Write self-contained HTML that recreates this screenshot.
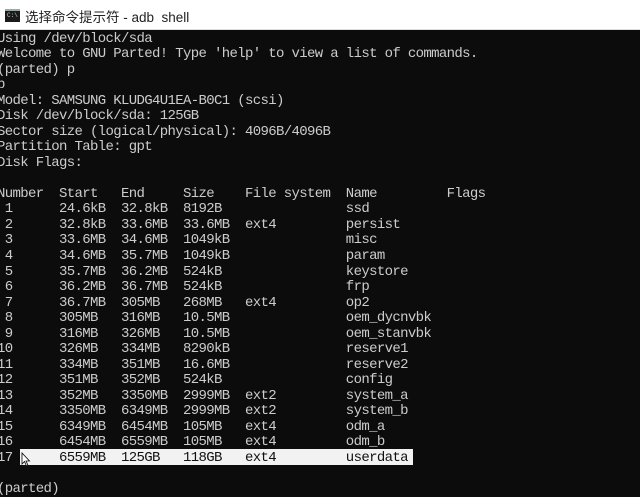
<!DOCTYPE html>
<html><head><meta charset="utf-8"><style>
html,body{margin:0;padding:0;width:640px;height:492px;overflow:hidden;background:#0c0c0c}
#title{position:absolute;left:0;top:0;width:640px;height:29px;background:#fff;border-bottom:1px solid #ddd}
#title .t{position:absolute;left:25px;top:6px;font:13.5px "Liberation Sans","Noto Sans CJK SC",sans-serif;color:#222}
#icon{position:absolute;left:5px;top:9px;width:15px;height:11px;background:#1a1a1a;border-top:2px solid #9aa}
#icon span{position:absolute;left:2px;top:1px;color:#ccc;font:6px "Liberation Mono",monospace}
.l{position:absolute;left:-3px;height:15.53px;line-height:15.53px;font:14px "Liberation Mono",monospace;letter-spacing:-0.65px;color:#cccccc;white-space:pre}
#hl{position:absolute;left:20px;top:449px;width:393px;height:16px;background:#f2f2f2}
</style></head><body>
<div id="title"><div id="icon"><span>C:\</span></div><div class="t">选择命令提示符 - adb&nbsp; shell</div></div>
<div id="hl"></div>
<div class="l" style="top:30.5px">Using /dev/block/sda</div>
<div class="l" style="top:46px">Welcome to GNU Parted! Type 'help' to view a list of commands.</div>
<div class="l" style="top:61.6px">(parted) p</div>
<div class="l" style="top:77.1px">p</div>
<div class="l" style="top:92.6px">Model: SAMSUNG KLUDG4U1EA-B0C1 (scsi)</div>
<div class="l" style="top:108.2px">Disk /dev/block/sda: 125GB</div>
<div class="l" style="top:123.7px">Sector size (logical/physical): 4096B/4096B</div>
<div class="l" style="top:139.2px">Partition Table: gpt</div>
<div class="l" style="top:154.7px">Disk Flags:</div>
<div class="l" style="top:185.8px">Number  Start   End     Size    File system  Name         Flags</div>
<div class="l" style="top:201.3px"> 1      24.6kB  32.8kB  8192B                ssd</div>
<div class="l" style="top:216.9px"> 2      32.8kB  33.6MB  33.6MB  ext4         persist</div>
<div class="l" style="top:232.4px"> 3      33.6MB  34.6MB  1049kB               misc</div>
<div class="l" style="top:247.9px"> 4      34.6MB  35.7MB  1049kB               param</div>
<div class="l" style="top:263.5px"> 5      35.7MB  36.2MB  524kB                keystore</div>
<div class="l" style="top:279px"> 6      36.2MB  36.7MB  524kB                frp</div>
<div class="l" style="top:294.5px"> 7      36.7MB  305MB   268MB   ext4         op2</div>
<div class="l" style="top:310px"> 8      305MB   316MB   10.5MB               oem_dycnvbk</div>
<div class="l" style="top:325.6px"> 9      316MB   326MB   10.5MB               oem_stanvbk</div>
<div class="l" style="top:341.1px">10      326MB   334MB   8290kB               reserve1</div>
<div class="l" style="top:356.6px">11      334MB   351MB   16.6MB               reserve2</div>
<div class="l" style="top:372.2px">12      351MB   352MB   524kB                config</div>
<div class="l" style="top:387.7px">13      352MB   3350MB  2999MB  ext2         system_a</div>
<div class="l" style="top:403.2px">14      3350MB  6349MB  2999MB  ext2         system_b</div>
<div class="l" style="top:418.7px">15      6349MB  6454MB  105MB   ext4         odm_a</div>
<div class="l" style="top:434.3px">16      6454MB  6559MB  105MB   ext4         odm_b</div>
<div class="l" style="top:449.8px">17</div>
<div class="l" style="top:449.8px;color:#111">        6559MB  125GB   118GB   ext4         userdata</div>
<div class="l" style="top:480.9px">(parted)</div>
<svg style="position:absolute;left:21px;top:452px" width="10" height="15" viewBox="0 0 10 15"><path d="M1 1 L1 12 L3.5 9.5 L5.5 14 L7 13.3 L5 9 L8.5 9 Z" fill="#fff" stroke="#000" stroke-width="0.8"/></svg>
</body></html>
